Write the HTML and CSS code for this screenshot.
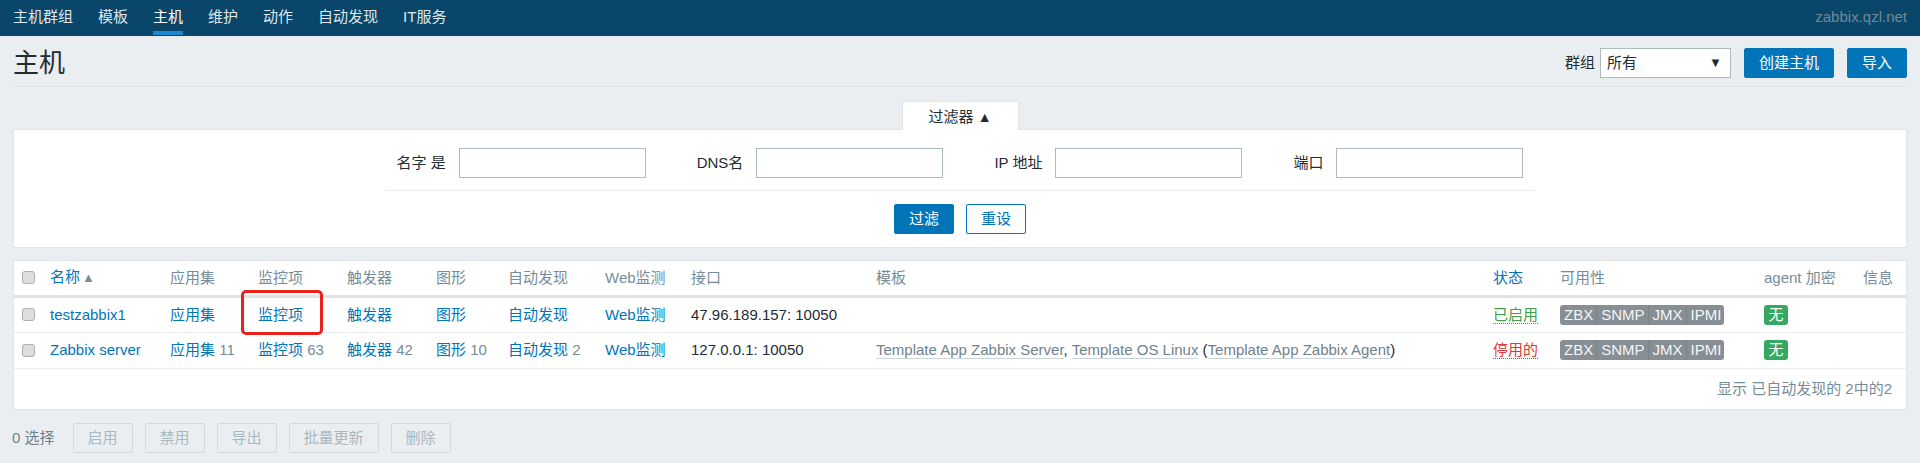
FILE: index.html
```html
<!DOCTYPE html>
<html lang="zh-CN">
<head>
<meta charset="utf-8">
<title>主机</title>
<link rel="stylesheet" href="styles.css">
</head>
<body>
<nav class="topnav">
  <ul class="menu">
    <li><a href="#">主机群组</a></li>
    <li><a href="#">模板</a></li>
    <li class="active"><a href="#">主机</a></li>
    <li><a href="#">维护</a></li>
    <li><a href="#">动作</a></li>
    <li><a href="#">自动发现</a></li>
    <li><a href="#">IT服务</a></li>
  </ul>
  <div class="server">zabbix.qzl.net</div>
</nav>

<header class="page-header">
  <h1 class="title">主机</h1>
  <div class="controls">
    <span class="ctl-label">群组</span>
    <div class="select"><span>所有</span><span class="caret">▼</span></div>
    <button class="btn">创建主机</button>
    <button class="btn">导入</button>
  </div>
</header>

<section class="filter">
  <div class="filter-tabs"><div class="tab">过滤器 <span class="tri">▲</span></div></div>
  <div class="filter-box">
    <div class="filter-sep">
      <div class="filter-row">
        <div class="fgroup"><label>名字 是</label><span class="input"></span></div>
        <div class="fgroup"><label>DNS名</label><span class="input"></span></div>
        <div class="fgroup"><label>IP 地址</label><span class="input"></span></div>
        <div class="fgroup"><label>端口</label><span class="input"></span></div>
      </div>
    </div>
    <div class="filter-buttons">
      <button class="btn">过滤</button>
      <button class="btn btn-alt">重设</button>
    </div>
  </div>
</section>

<section class="list">
  <table class="hosts">
    <colgroup>
      <col class="c-chk"><col class="c-name"><col class="c-app"><col class="c-item"><col class="c-trig"><col class="c-graph"><col class="c-disc"><col class="c-web"><col class="c-if"><col class="c-tpl"><col class="c-status"><col class="c-avail"><col class="c-enc"><col>
    </colgroup>
    <thead>
      <tr>
        <th><span class="chk"></span></th>
        <th><a href="#" class="link">名称</a><span class="sort">▲</span></th>
        <th>应用集</th>
        <th>监控项</th>
        <th>触发器</th>
        <th>图形</th>
        <th>自动发现</th>
        <th>Web监测</th>
        <th>接口</th>
        <th>模板</th>
        <th><a href="#" class="link">状态</a></th>
        <th>可用性</th>
        <th>agent 加密</th>
        <th>信息</th>
      </tr>
    </thead>
    <tbody>
      <tr>
        <td><span class="chk"></span></td>
        <td><a href="#" class="link">testzabbix1</a></td>
        <td><a href="#" class="link">应用集</a></td>
        <td><span class="marked"><a href="#" class="link">监控项</a><span class="redbox"></span></span></td>
        <td><a href="#" class="link">触发器</a></td>
        <td><a href="#" class="link">图形</a></td>
        <td><a href="#" class="link">自动发现</a></td>
        <td><a href="#" class="link">Web监测</a></td>
        <td>47.96.189.157: 10050</td>
        <td></td>
        <td><a href="#" class="st st-on">已启用</a></td>
        <td><span class="avail"><span>ZBX</span><span>SNMP</span><span>JMX</span><span>IPMI</span></span></td>
        <td><span class="enc">无</span></td>
        <td></td>
      </tr>
      <tr>
        <td><span class="chk"></span></td>
        <td><a href="#" class="link">Zabbix server</a></td>
        <td><a href="#" class="link">应用集</a> <span class="cnt">11</span></td>
        <td><a href="#" class="link">监控项</a> <span class="cnt">63</span></td>
        <td><a href="#" class="link">触发器</a> <span class="cnt">42</span></td>
        <td><a href="#" class="link">图形</a> <span class="cnt">10</span></td>
        <td><a href="#" class="link">自动发现</a> <span class="cnt">2</span></td>
        <td><a href="#" class="link">Web监测</a></td>
        <td>127.0.0.1: 10050</td>
        <td><a href="#" class="tpl">Template App Zabbix Server</a>, <a href="#" class="tpl">Template OS Linux</a> (<a href="#" class="tpl">Template App Zabbix Agent</a>)</td>
        <td><a href="#" class="st st-off">停用的</a></td>
        <td><span class="avail"><span>ZBX</span><span>SNMP</span><span>JMX</span><span>IPMI</span></span></td>
        <td><span class="enc">无</span></td>
        <td></td>
      </tr>
    </tbody>
  </table>
  <div class="table-footer">显示 已自动发现的 2中的2</div>
</section>

<div class="actions">
  <span class="sel-count">0 选择</span>
  <button class="btn-dis">启用</button>
  <button class="btn-dis">禁用</button>
  <button class="btn-dis">导出</button>
  <button class="btn-dis">批量更新</button>
  <button class="btn-dis">删除</button>
</div>
</body>
</html>
```

FILE: styles.css
```css
* { box-sizing: border-box; }

body {
  margin: 0;
  background: #ebeef0;
  color: #1f2c33;
  font-family: "Liberation Sans", "Noto Sans CJK SC", sans-serif;
  font-size: 15px;
  line-height: 18px;
}

a { text-decoration: none; }

/* top navigation */
.topnav {
  display: flex;
  justify-content: space-between;
  align-items: flex-start;
  height: 36px;
  background: #0a466a;
  padding: 0 13px;
}
.menu {
  display: flex;
  gap: 25px;
  list-style: none;
  margin: 0;
  padding: 0;
}
.menu a {
  display: block;
  padding: 8px 0 5px;
  line-height: 18px;
  border-bottom: 4px solid transparent;
  color: #dfe6ea;
}
.menu .active a {
  color: #ffffff;
  border-bottom-color: #1d87cf;
}
.server {
  padding-top: 8px;
  color: #6f8a99;
}

/* page header */
.page-header {
  display: flex;
  justify-content: space-between;
  align-items: center;
  height: 51px;
  padding-top: 3px;
  margin: 0 13px;
  border-bottom: 1px solid #dde3e6;
}
.title {
  margin: 0;
  font-size: 26px;
  font-weight: normal;
  line-height: 30px;
  color: #1f2c33;
}
.controls {
  display: flex;
  align-items: center;
}
.ctl-label { margin-right: 5px; }
.select {
  display: flex;
  justify-content: space-between;
  align-items: center;
  width: 131px;
  height: 30px;
  padding: 0 8px 0 6px;
  background: #fff;
  border: 1px solid #acbbc2;
  margin-right: 13px;
}
.caret { font-size: 13px; color: #1f2c33; }

.btn {
  height: 30px;
  padding: 0 14px;
  border: 1px solid #0275b8;
  border-radius: 2px;
  background: #0275b8;
  color: #fff;
  font: inherit;
  line-height: 18px;
}
.controls .btn + .btn { margin-left: 13px; }
.btn-alt {
  background: #fff;
  color: #0275b8;
}

/* filter */
.filter { margin: 14px 13px 0; }
.filter-tabs {
  display: flex;
  justify-content: center;
}
.tab {
  position: relative;
  z-index: 1;
  width: 117px;
  height: 29px;
  margin-bottom: -1px;
  padding-top: 6px;
  text-align: center;
  background: #fff;
  border: 1px solid #dfe4e7;
  border-bottom: none;
  border-radius: 2px 2px 0 0;
}
.tri { font-size: 14px; color: #1f2c33; }
.filter-box {
  background: #fff;
  border: 1px solid #dfe4e7;
  padding: 18px 0 13px;
}
.filter-sep {
  width: 1150px;
  margin: 0 auto;
  padding-bottom: 12px;
  border-bottom: 1px solid #ebeef0;
}
.filter-row {
  display: flex;
  justify-content: center;
  gap: 51px;
}
.fgroup {
  display: flex;
  align-items: center;
  gap: 13px;
}
.input {
  display: block;
  width: 187px;
  height: 30px;
  border: 1px solid #acbbc2;
  background: #fff;
}
.filter-buttons {
  display: flex;
  justify-content: center;
  gap: 12px;
  margin-top: 13px;
}
.filter-buttons .btn { width: 60px; padding: 0; }

/* list */
.list {
  margin: 12px 13px 0;
  background: #fff;
  border: 1px solid #dfe4e7;
}
.hosts {
  width: 100%;
  border-collapse: collapse;
  table-layout: fixed;
}
.c-chk { width: 28px; }
.c-name { width: 120px; }
.c-app { width: 88px; }
.c-item { width: 89px; }
.c-trig { width: 89px; }
.c-graph { width: 72px; }
.c-disc { width: 97px; }
.c-web { width: 86px; }
.c-if { width: 185px; }
.c-tpl { width: 617px; }
.c-status { width: 67px; }
.c-avail { width: 204px; }
.c-enc { width: 99px; }

.hosts th {
  height: 35px;
  padding: 0 0 0 8px;
  text-align: left;
  font-weight: normal;
  color: #768d99;
  border-bottom: 3px solid #dfe3e6;
  white-space: nowrap;
}
.hosts td {
  height: 36px;
  padding: 0 0 0 8px;
  border-bottom: 1px solid #ebeef0;
  white-space: nowrap;
  vertical-align: middle;
}
.chk {
  display: block;
  width: 13px;
  height: 13px;
  border: 1px solid #a9afb3;
  border-radius: 3px;
  background: #dcdddf;
}
.link { color: #0275b8; }
.sort { font-size: 13px; color: #768d99; margin-left: 2px; }
.cnt { color: #768d99; }
.tpl {
  color: #6f828c;
  border-bottom: 1px solid #c9d3d8;
}
.st { border-bottom: 1px dotted; }
.st-on { color: #429e47; }
.st-off { color: #e33734; }

.marked {
  position: relative;
  display: inline-block;
}
.redbox {
  position: absolute;
  left: -17px;
  top: -16px;
  width: 82px;
  height: 45px;
  border: 3px solid #e8221c;
  border-radius: 5px;
}

.avail {
  display: inline-flex;
  border-radius: 3px;
  overflow: hidden;
  vertical-align: middle;
}
.avail span {
  height: 20px;
  line-height: 20px;
  padding: 0 3px 0 4px;
  background: #878f95;
  color: #f4f6f7;
}
.avail span + span { border-left: 1px solid #7a8388; }
.enc {
  display: inline-block;
  width: 24px;
  height: 20px;
  line-height: 20px;
  text-align: center;
  border-radius: 3px;
  background: #35a862;
  color: #fff;
  vertical-align: middle;
}

.table-footer {
  height: 40px;
  line-height: 40px;
  padding-right: 14px;
  text-align: right;
  color: #768d99;
}

/* action bar */
.actions {
  display: flex;
  align-items: center;
  gap: 12px;
  margin: 13px 12px 0;
}
.sel-count {
  color: #6e818b;
  margin-right: 6px;
}
.btn-dis {
  height: 30px;
  padding: 0 14px;
  background: #ebeef0;
  border: 1px solid #d2d9dd;
  border-radius: 2px;
  color: #a9b8bf;
  font: inherit;
  line-height: 18px;
}
```
